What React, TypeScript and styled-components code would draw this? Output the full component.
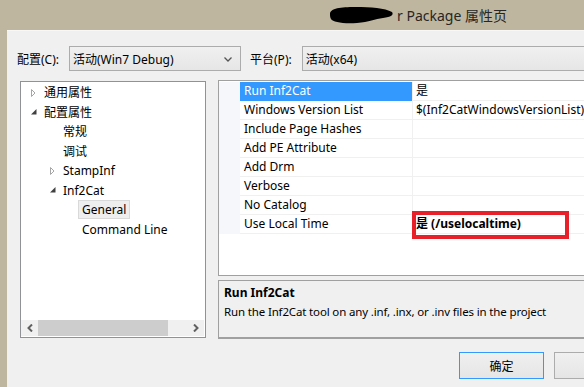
import React from "react";
import styled, { createGlobalStyle } from "styled-components";

const uiFont = `"Segoe UI", "Noto Sans", "Noto Sans CJK SC", sans-serif`;

const GlobalStyle = createGlobalStyle`
  html, body {
    margin: 0;
    padding: 0;
    background: #bfb69f;
  }
  * {
    box-sizing: border-box;
  }
`;

type TreeItem = {
  label: string;
  level: number;
  toggle?: "open" | "closed";
  selected?: boolean;
};

const treeItems: TreeItem[] = [
  { label: "通用属性", level: 0, toggle: "closed" },
  { label: "配置属性", level: 0, toggle: "open" },
  { label: "常规", level: 1 },
  { label: "调试", level: 1 },
  { label: "StampInf", level: 1, toggle: "closed" },
  { label: "Inf2Cat", level: 1, toggle: "open" },
  { label: "General", level: 2, selected: true },
  { label: "Command Line", level: 2 },
];

type Prop = {
  name: string;
  value?: string;
  selected?: boolean;
  strong?: boolean;
};

const props: Prop[] = [
  { name: "Run Inf2Cat", value: "是", selected: true },
  { name: "Windows Version List", value: "$(Inf2CatWindowsVersionList)" },
  { name: "Include Page Hashes" },
  { name: "Add PE Attribute" },
  { name: "Add Drm" },
  { name: "Verbose" },
  { name: "No Catalog" },
  { name: "Use Local Time", value: "是 (/uselocaltime)", strong: true },
];

export default function App() {
  return (
    <Window>
      <GlobalStyle />
      <TitleBar>
        {/* redaction scribble over the project name */}
        <svg width="66" height="20" viewBox="0 0 66 20">
          <path
            d="M1 9 C1 3 12 2 26 2 C42 2 56 3 63 7 C65 10 62 12 54 13 C46 14 40 17 28 18 C14 19 4 17 2 14 C1 12 1 11 1 9 Z"
            fill="#000"
          />
        </svg>
        <Title>r Package 属性页</Title>
      </TitleBar>
      <Client>
        <ConfigRow>
          <FieldLabel>配置(C):</FieldLabel>
          <Combo $width={172}>
            活动(Win7 Debug)
            <Chevron>
              <svg width="8" height="5" viewBox="0 0 8 5">
                <path d="M0.5 0.5 L4 4 L7.5 0.5" stroke="#555" strokeWidth="1.3" fill="none" />
              </svg>
            </Chevron>
          </Combo>
          <FieldLabel $gap={9}>平台(P):</FieldLabel>
          <Combo $width={320}>活动(x64)</Combo>
        </ConfigRow>

        <Main>
          <Tree>
            <TreeList>
              {treeItems.map((item) => (
                <TreeRow key={item.label} $level={item.level}>
                  <Toggle>
                    {item.toggle === "closed" && (
                      <svg width="5" height="8" viewBox="0 0 5 8">
                        <path d="M0.5 0.5 L4 4 L0.5 7.5 Z" stroke="#a6a6a6" fill="none" />
                      </svg>
                    )}
                    {item.toggle === "open" && (
                      <svg width="6" height="6" viewBox="0 0 6 6">
                        <path d="M5.5 0 L5.5 5.5 L0 5.5 Z" fill="#404040" />
                      </svg>
                    )}
                  </Toggle>
                  <TreeLabel $selected={item.selected}>{item.label}</TreeLabel>
                </TreeRow>
              ))}
            </TreeList>
            <HScroll>
              <ScrollArrow>
                <svg width="6" height="8" viewBox="0 0 6 8">
                  <path d="M5 0.5 L1.5 4 L5 7.5" stroke="#606060" strokeWidth="2" fill="none" />
                </svg>
              </ScrollArrow>
              <Thumb />
              <Track />
              <ScrollArrow>
                <svg width="6" height="8" viewBox="0 0 6 8">
                  <path d="M1 0.5 L4.5 4 L1 7.5" stroke="#606060" strokeWidth="2" fill="none" />
                </svg>
              </ScrollArrow>
            </HScroll>
          </Tree>

          <RightCol>
            <Grid>
              {props.map((p) => (
                <GridRow key={p.name}>
                  <Gutter />
                  <NameCell $selected={p.selected}>{p.name}</NameCell>
                  <ValueCell $strong={p.strong}>
                    {p.value}
                    {p.strong && <Highlight />}
                  </ValueCell>
                </GridRow>
              ))}
            </Grid>
            <Description>
              <DescTitle>Run Inf2Cat</DescTitle>
              <DescText>Run the Inf2Cat tool on any .inf, .inx, or .inv files in the project</DescText>
            </Description>
            <Buttons>
              <Button $default>确定</Button>
              <Button>取消</Button>
            </Buttons>
          </RightCol>
        </Main>
      </Client>
    </Window>
  );
}

const Window = styled.div`
  width: 584px;
  height: 387px;
  overflow: hidden;
  display: flex;
  flex-direction: column;
  background: #bfb69f;
  font-family: ${uiFont};
  font-size: 12px;
  color: #000;
`;

const TitleBar = styled.div`
  height: 30px;
  flex: none;
  display: flex;
  align-items: center;
  padding-left: 329px;
  padding-bottom: 1px;
`;

const Title = styled.span`
  font-size: 14px;
  color: #262626;
  margin-left: 2px;
  white-space: nowrap;
`;

const Client = styled.div`
  flex: 1;
  margin-left: 7px;
  width: 700px;
  background: #f0f0f0;
  border-top: 1px solid #f7f7f7;
  display: flex;
  flex-direction: column;
`;

const ConfigRow = styled.div`
  display: flex;
  align-items: center;
  height: 25px;
  margin-top: 15px;
  padding-left: 10px;
`;

const FieldLabel = styled.span<{ $gap?: number }>`
  margin-left: ${(p) => p.$gap ?? 0}px;
  margin-right: 10px;
  white-space: nowrap;
`;

const Combo = styled.div<{ $width: number }>`
  width: ${(p) => p.$width}px;
  height: 25px;
  flex: none;
  display: flex;
  align-items: center;
  padding-left: 3px;
  border: 1px solid #acacac;
  background: linear-gradient(#f0f0f0, #e6e6e6);
  white-space: nowrap;
`;

const Chevron = styled.span`
  margin-left: auto;
  width: 16px;
  display: flex;
  align-items: center;
  padding-top: 1px;
`;

const Main = styled.div`
  display: flex;
  align-items: flex-start;
  margin-top: 9px;
`;

const Tree = styled.div`
  width: 186px;
  height: 257px;
  margin-left: 13px;
  margin-top: 1px;
  flex: none;
  border: 1px solid #8f9297;
  background: #fff;
  display: flex;
  flex-direction: column;
`;

const TreeList = styled.div`
  flex: 1;
  padding-top: 1px;
`;

const TreeRow = styled.div<{ $level: number }>`
  height: 19.5px;
  display: flex;
  align-items: center;
  padding-left: ${(p) => 10 + p.$level * 19}px;
`;

const Toggle = styled.span`
  width: 9px;
  flex: none;
  display: flex;
  align-items: center;
`;

const TreeLabel = styled.span<{ $selected?: boolean }>`
  height: 19px;
  line-height: 17px;
  padding: 0 3px;
  border: 1px solid ${(p) => (p.$selected ? "#d9d9d9" : "transparent")};
  background: ${(p) => (p.$selected ? "#eeeeee" : "transparent")};
  white-space: nowrap;
`;

const HScroll = styled.div`
  height: 16px;
  margin: 0 1px 1px 0;
  display: flex;
  background: #f0f0f0;
`;

const ScrollArrow = styled.div`
  width: 17px;
  flex: none;
  display: flex;
  align-items: center;
  justify-content: center;
`;

const Thumb = styled.div`
  width: 130px;
  background: #cdcdcd;
`;

const Track = styled.div`
  flex: 1;
`;

const RightCol = styled.div`
  margin-left: 12px;
  width: 420px;
  flex: none;
  display: flex;
  flex-direction: column;
`;

const Grid = styled.div`
  height: 196px;
  border: 1px solid #a0a0a0;
  border-right: none;
  background: #fff;
  padding-top: 1px;
`;

const GridRow = styled.div`
  display: flex;
  height: 19px;
`;

const Gutter = styled.div`
  width: 21px;
  flex: none;
  background: #f5f7fa;
`;

const NameCell = styled.div<{ $selected?: boolean }>`
  width: 172px;
  flex: none;
  padding-left: 4px;
  line-height: 18px;
  border-bottom: 1px solid ${(p) => (p.$selected ? "#3399ff" : "#f0f0f0")};
  background: ${(p) => (p.$selected ? "#3399ff" : "#fff")};
  color: ${(p) => (p.$selected ? "#fff" : "#000")};
  white-space: nowrap;
`;

const ValueCell = styled.div<{ $strong?: boolean }>`
  position: relative;
  flex: 1;
  padding-left: 3px;
  line-height: 18px;
  border-left: 1px solid #f0f0f0;
  border-bottom: 1px solid #f0f0f0;
  font-weight: ${(p) => (p.$strong ? 700 : 400)};
  white-space: nowrap;
`;

const Highlight = styled.div`
  position: absolute;
  left: -1px;
  top: -4px;
  width: 157px;
  height: 28px;
  border: 4px solid #e8202a;
`;

const Description = styled.div`
  height: 59px;
  margin-top: 4px;
  border: 1px solid #a0a0a0;
  border-bottom-width: 2px;
  border-right: none;
  background: #f0f0f0;
  padding: 2px 0 0 5px;
  line-height: 19px;
`;

const DescTitle = styled.div`
  font-weight: 700;
`;

const DescText = styled.div`
  font-size: 11.5px;
  letter-spacing: -0.15px;
  white-space: nowrap;
`;

const Buttons = styled.div`
  display: flex;
  gap: 10px;
  margin-top: 13px;
  padding-left: 241px;
`;

const Button = styled.div<{ $default?: boolean }>`
  width: 85px;
  height: 27px;
  flex: none;
  display: flex;
  align-items: center;
  justify-content: center;
  border: 1px solid ${(p) => (p.$default ? "#3399ff" : "#acacac")};
  background: linear-gradient(#f0f0f0, #e5e5e5);
`;
